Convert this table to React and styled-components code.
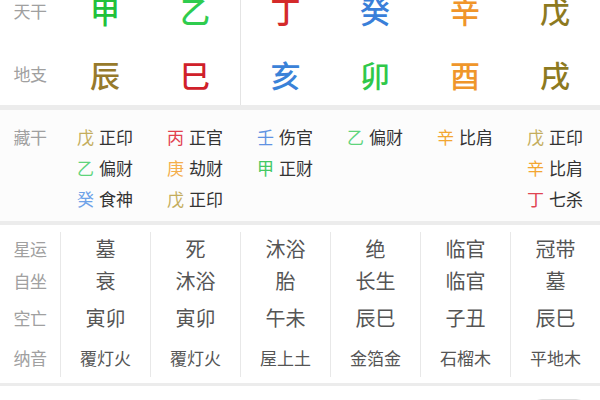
import React from "react";
import styled, { createGlobalStyle } from "styled-components";

const Global = createGlobalStyle`
  html, body { margin: 0; padding: 0; background: #ececec; overflow: hidden; }
  body { font-family: "Noto Sans CJK SC", "Noto Sans", sans-serif; width: 600px; height: 400px; }
`;

const Page = styled.div`
  width: 600px;
  margin-top: -22px;
  display: flex;
  flex-direction: column;
`;

const Section = styled.section`
  background: ${(p) => p.$bg || "#fff"};
  margin-bottom: ${(p) => p.$gap || 0}px;
  padding: ${(p) => p.$pad || "0"};
`;

const Grid = styled.div`
  display: grid;
  grid-template-columns: 60px repeat(6, 90px);
`;

const Label = styled.div`
  height: ${(p) => p.$h}px;
  display: flex;
  align-items: center;
  justify-content: center;
  font-size: 17px;
  color: #a0a0a0;
  letter-spacing: -0.5px;
`;

const Pillar = styled.div`
  height: ${(p) => p.$h}px;
  display: flex;
  align-items: center;
  justify-content: center;
  font-size: 30px;
  font-weight: 500;
  color: ${(p) => p.$c};
  border-left: ${(p) => (p.$div ? "1px solid #e4e4e4" : "none")};
`;

const HiddenCell = styled.div`
  display: flex;
  flex-direction: column;
  padding-left: 17px;
`;

const HiddenItem = styled.div`
  height: 31px;
  display: flex;
  align-items: center;
  gap: 5px;
  font-size: 17px;
  color: #333;
`;

const Stem = styled.span`
  color: ${(p) => p.$c};
`;

const InfoCol = styled.div`
  display: flex;
  flex-direction: column;
  border-left: 1px solid #e8e8e8;
`;

const LabelCol = styled.div`
  display: flex;
  flex-direction: column;
`;

const Value = styled.div`
  height: ${(p) => p.$h}px;
  display: flex;
  align-items: center;
  justify-content: center;
  font-size: ${(p) => p.$fs || 20}px;
  color: #555;
`;

const BottomRow = styled.div`
  background: #fff;
  height: 40px;
  display: flex;
  align-items: flex-start;
  justify-content: space-between;
  padding: 10px 12px 0 8px;
`;

const BottomText = styled.div`
  font-size: 17px;
  color: #333;
`;

const BottomRight = styled.div`
  display: flex;
  gap: 10px;
  align-items: flex-start;
  font-size: 14px;
  color: #999;
`;

const Pill = styled.div`
  width: 56px;
  height: 24px;
  border: 1px solid #ddd;
  border-radius: 12px;
  margin-top: 3px;
`;

const stems = [
  ["甲", "#21c13a"],
  ["乙", "#2fcc4e"],
  ["丁", "#d42a2a"],
  ["癸", "#3a7fd9"],
  ["辛", "#f0952a"],
  ["戊", "#8d7a1f"],
];
const branches = [
  ["辰", "#977a2b"],
  ["巳", "#d0202a"],
  ["亥", "#3a82d8"],
  ["卯", "#2fc84a"],
  ["酉", "#ef962b"],
  ["戌", "#8d7a1f"],
];

const C = {
  戊: "#c4ad5c",
  乙: "#5ed47c",
  癸: "#6ea2e8",
  丙: "#e2404f",
  庚: "#f4ae4c",
  壬: "#5f92e2",
  甲: "#43c863",
  辛: "#f3a631",
  丁: "#e04452",
};

const hidden = [
  [["戊", "正印"], ["乙", "偏财"], ["癸", "食神"]],
  [["丙", "正官"], ["庚", "劫财"], ["戊", "正印"]],
  [["壬", "伤官"], ["甲", "正财"]],
  [["乙", "偏财"]],
  [["辛", "比肩"]],
  [["戊", "正印"], ["辛", "比肩"], ["丁", "七杀"]],
];

const info = [
  ["墓", "衰", "寅卯", "覆灯火"],
  ["死", "沐浴", "寅卯", "覆灯火"],
  ["沐浴", "胎", "午未", "屋上土"],
  ["绝", "长生", "辰巳", "金箔金"],
  ["临官", "临官", "子丑", "石榴木"],
  ["冠带", "墓", "辰巳", "平地木"],
];

const rowH = [32, 33, 40, 40];
const infoLabels = ["星运", "自坐", "空亡", "纳音"];

export default function App() {
  return (
    <>
      <Global />
      <Page>
        <Section $gap={5}>
          <Grid>
            <Label $h={64}>天干</Label>
            {stems.map(([t, c], i) => (
              <Pillar key={i} $h={64} $c={c} $div={i === 2}>{t}</Pillar>
            ))}
            <Label $h={63}>地支</Label>
            {branches.map(([t, c], i) => (
              <Pillar key={i} $h={63} $c={c} $div={i === 2}>{t}</Pillar>
            ))}
          </Grid>
        </Section>
        <Section $bg="#fcfcfc" $gap={4} $pad="11px 0 7px">
          <Grid>
            <LabelCol>
              <Label $h={31}>藏干</Label>
            </LabelCol>
            {hidden.map((col, i) => (
              <HiddenCell key={i}>
                {col.map(([s, g], j) => (
                  <HiddenItem key={j}>
                    <Stem $c={C[s]}>{s}</Stem>
                    <span>{g}</span>
                  </HiddenItem>
                ))}
              </HiddenCell>
            ))}
          </Grid>
        </Section>
        <Section $gap={3} $pad="7px 0 6px">
          <Grid>
            <LabelCol>
              {infoLabels.map((l, i) => (
                <Label key={i} $h={rowH[i]}>{l}</Label>
              ))}
            </LabelCol>
            {info.map((col, i) => (
              <InfoCol key={i}>
                {col.map((v, j) => (
                  <Value key={j} $h={rowH[j]} $fs={j === 3 ? 17 : 20}>{v}</Value>
                ))}
              </InfoCol>
            ))}
          </Grid>
        </Section>
        <BottomRow>
          <BottomText>命主八字五行强弱分析及喜用神解读</BottomText>
          <BottomRight>
            <span>详情</span>
            <Pill />
          </BottomRight>
        </BottomRow>
      </Page>
    </>
  );
}
